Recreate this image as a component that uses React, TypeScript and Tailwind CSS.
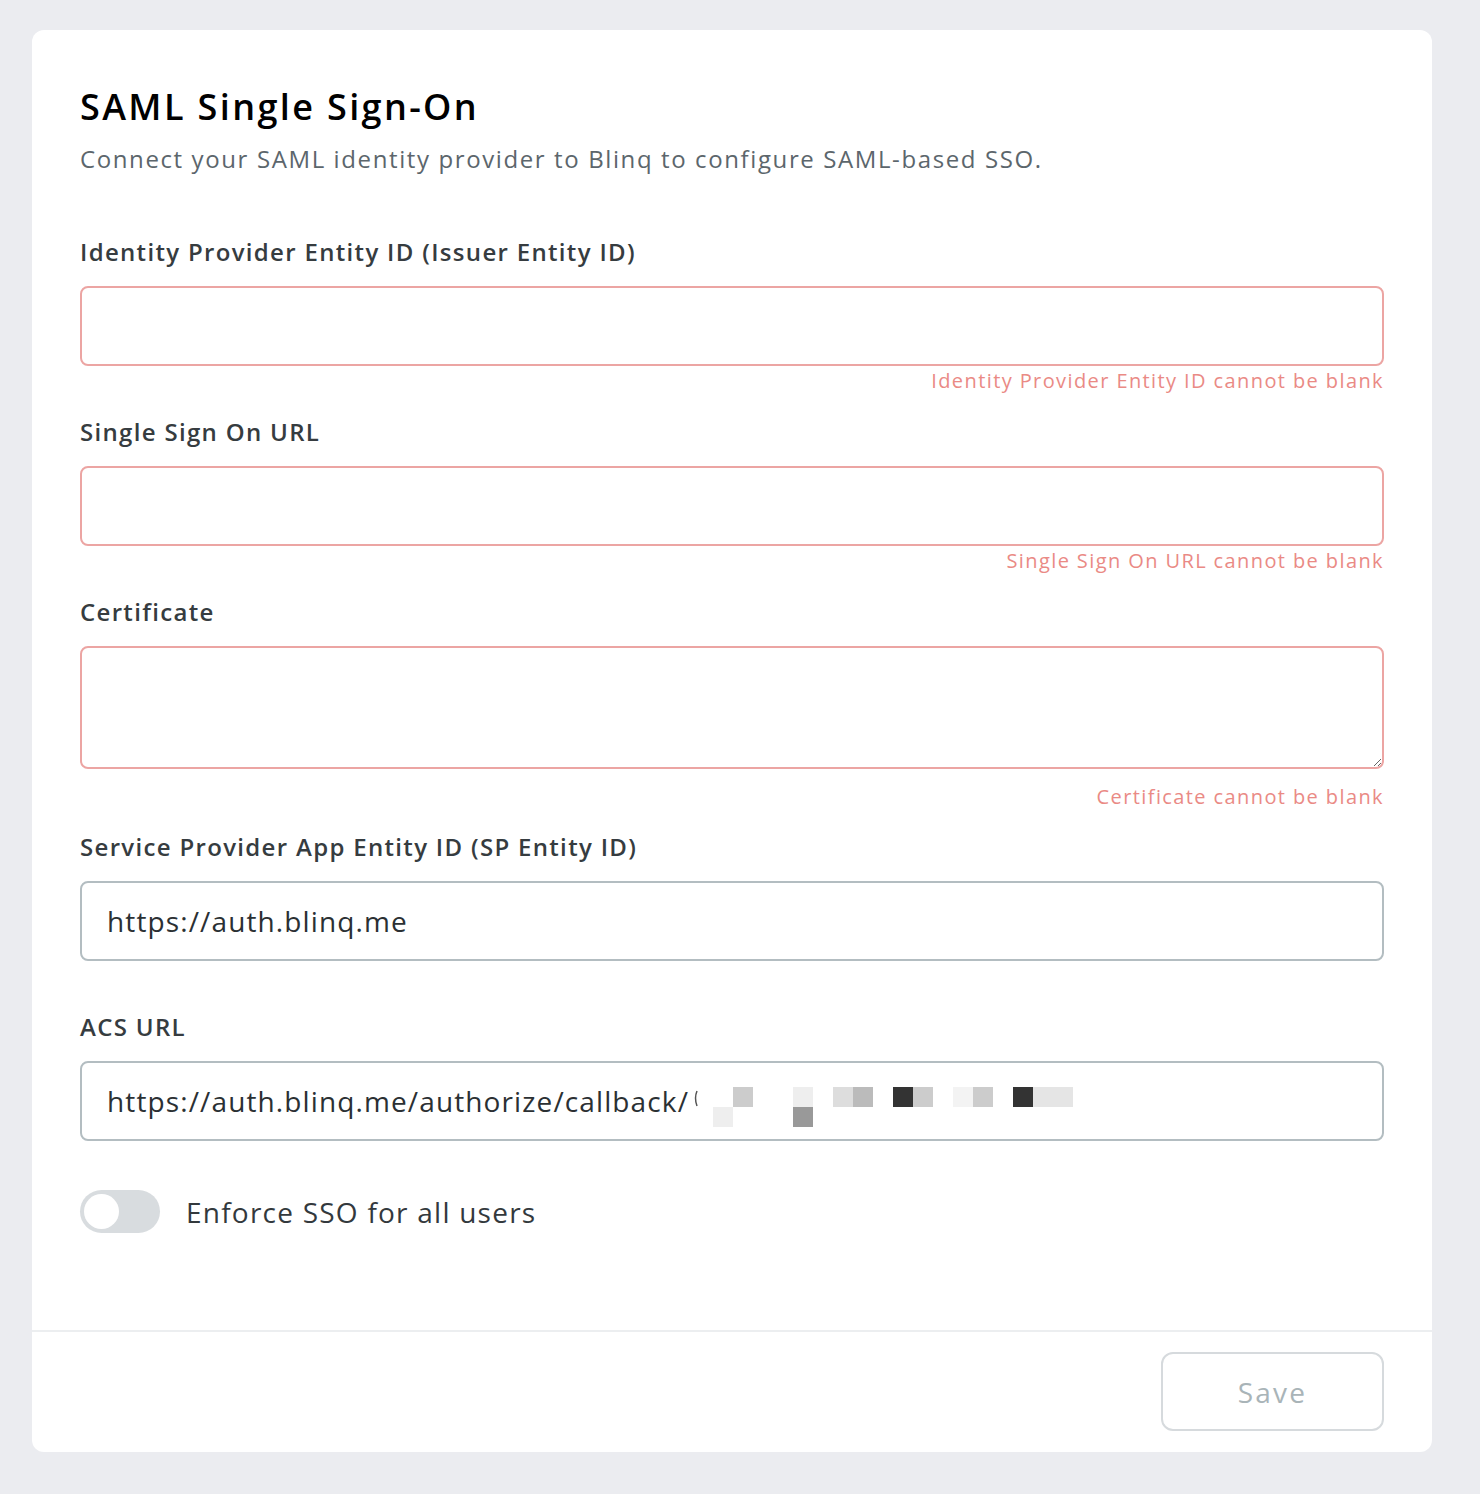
import React, { useState } from 'react';

// Pixel blocks that blur out the tail of the ACS URL
const REDACT: { x: number; y: number; w: number; c: string }[] = [
  { x: 20, y: 0, w: 20, c: '#cccccc' },
  { x: 80, y: 0, w: 20, c: '#eeeeee' },
  { x: 120, y: 0, w: 20, c: '#dddddd' },
  { x: 140, y: 0, w: 20, c: '#bbbbbb' },
  { x: 180, y: 0, w: 20, c: '#333333' },
  { x: 200, y: 0, w: 20, c: '#cccccc' },
  { x: 240, y: 0, w: 20, c: '#f3f3f3' },
  { x: 260, y: 0, w: 20, c: '#cccccc' },
  { x: 300, y: 0, w: 20, c: '#333333' },
  { x: 320, y: 0, w: 40, c: '#e5e5e5' },
  { x: 0, y: 20, w: 20, c: '#eeeeee' },
  { x: 80, y: 20, w: 20, c: '#999999' },
];

const FONT = "font-['Open_Sans','Lato',sans-serif]";

function Field({ label, error, gap, children }: { label: string; error?: string; gap?: boolean; children: React.ReactNode }) {
  return (
    <div className="flex flex-col">
      <label className="text-[24px] leading-[32px] font-semibold tracking-[0.055em] text-[#363c40] mb-[18px]">{label}</label>
      {children}
      {error && (
        <p className={`text-right text-[20px] leading-[28px] tracking-[0.07em] text-[#ea8a85] ${gap ? 'mt-[14px]' : 'mt-[1px]'}`}>{error}</p>
      )}
    </div>
  );
}

export default function App() {
  const [enforce, setEnforce] = useState(false);

  const errorBox =
    'w-full h-[80px] rounded-[8px] border-2 border-[#eca5a3] bg-white px-[25px] text-[28px] outline-none block';
  const okBox =
    'w-full h-[80px] rounded-[8px] border-2 border-[#b3bdc1] bg-white px-[25px] text-[28px] tracking-[0.04em] text-[#2b3033] outline-none block';

  return (
    <div className={`min-h-[1494px] bg-[#ebecf0] px-[32px] pt-[30px] pb-[42px] ${FONT}`}>
      <div className="bg-white rounded-[12px] w-[1400px]">
        <div className="px-[48px] pt-[51px] pb-[97px]">
          <h1 className="text-[36px] leading-[52px] font-semibold tracking-[0.066em] text-black">SAML Single Sign-On</h1>
          <p className="text-[24px] leading-[32px] tracking-[0.067em] text-[#5c666c] mt-[10px]">
            Connect your SAML identity provider to Blinq to configure SAML-based SSO.
          </p>

          <div className="mt-[61px] flex flex-col">
            <Field label="Identity Provider Entity ID (Issuer Entity ID)" error="Identity Provider Entity ID cannot be blank">
              <input className={errorBox} />
            </Field>
            <div className="mt-[21px]">
              <Field label="Single Sign On URL" error="Single Sign On URL cannot be blank">
                <input className={errorBox} />
              </Field>
            </div>
            <div className="mt-[21px]">
              <Field label="Certificate" error="Certificate cannot be blank" gap>
                <textarea className="w-full h-[123px] rounded-[8px] border-2 border-[#eca5a3] bg-white px-[25px] py-[18px] text-[28px] outline-none block" />
              </Field>
            </div>
            <div className="mt-[20px]">
              <Field label="Service Provider App Entity ID (SP Entity ID)">
                <input className={okBox} readOnly value="https://auth.blinq.me" />
              </Field>
            </div>
            <div className="mt-[50px]">
              <Field label="ACS URL">
                <div className={`${okBox} relative flex items-center overflow-hidden`}>
                  <span className="whitespace-nowrap">https://auth.blinq.me/authorize/callback/</span>
                  <svg className="absolute left-[610px] top-[24px]" width="22" height="40">
                    <path d="M5 4 Q2 11 5 19" stroke="#555" strokeWidth="1.5" fill="none" />
                  </svg>
                  <svg className="absolute left-[631px] top-[24px]" width="360" height="40">
                    {REDACT.map((r, i) => (
                      <rect key={i} x={r.x} y={r.y} width={r.w} height="20" fill={r.c} />
                    ))}
                  </svg>
                </div>
              </Field>
            </div>

            <div className="mt-[49px] flex items-center gap-[26px]">
              <button
                onClick={() => setEnforce(!enforce)}
                className={`w-[80px] h-[43px] rounded-full p-[4px] flex items-center ${enforce ? 'bg-[#2b3033] justify-end' : 'bg-[#d8dcdf] justify-start'}`}
              >
                <span className="w-[35px] h-[35px] rounded-full bg-white block" />
              </button>
              <span className="text-[28px] leading-[40px] tracking-[0.044em] text-[#33393d]">Enforce SSO for all users</span>
            </div>
          </div>
        </div>

        <div className="border-t-2 border-[#eceef0] flex justify-end px-[48px] pt-[20px] pb-[21px]">
          <button className="w-[223px] h-[79px] rounded-[12px] border-2 border-[#d6dadd] text-[28px] font-medium tracking-[0.08em] text-[#a9b4b8]">
            Save
          </button>
        </div>
      </div>
    </div>
  );
}
